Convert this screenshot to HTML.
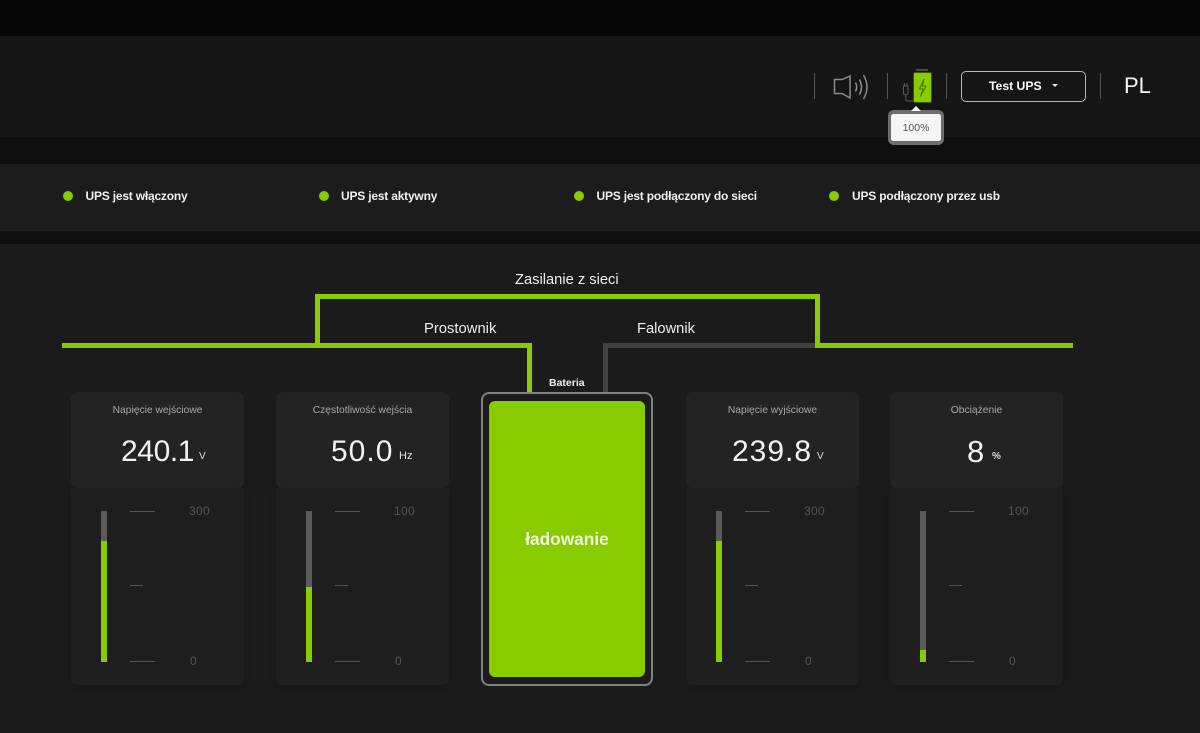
<!DOCTYPE html>
<html lang="pl"><head><meta charset="utf-8"><title>UPS</title>
<style>
*{box-sizing:border-box}
html,body{margin:0;padding:0}
body{width:1200px;height:733px;position:relative;overflow:hidden;background:#1b1b1b;font-family:"Liberation Sans",sans-serif;color:#fff}
.a{position:absolute}
.t{position:absolute;white-space:nowrap;line-height:1}
.g{background:#88cc00}
.sep{position:absolute;width:1px;height:26px;top:73px;background:#555}
.dot{position:absolute;width:10px;height:10px;border-radius:50%;background:#88cc00;top:191px}
.st{position:absolute;top:190px;font-size:12px;font-weight:bold;letter-spacing:-.2px;line-height:13px;white-space:nowrap;color:#f0f0f0}
.top{position:absolute;top:392px;width:173px;height:96px;background:#232323;border-radius:6px}
.bot{position:absolute;top:488px;width:173px;height:197px;background:#1e1e1e;border-radius:0 0 6px 6px;box-shadow:0 2px 8px rgba(0,0,0,.18)}
.lab{position:absolute;left:0;right:0;top:12.500px;text-align:center;font-size:10.300px;line-height:12px;color:#a8a8a8}
.val{position:absolute;top:44px;font-size:30px;line-height:31px;color:#f2f2f2;white-space:nowrap}
.un{position:absolute;top:58px;font-size:11px;line-height:12px;color:#ddd;white-space:nowrap}
.track{position:absolute;left:30px;top:23px;width:6px;height:151px;background:#5a5a5a}
.fill{position:absolute;left:0;right:0;bottom:0;background:#88cc00}
.tick{position:absolute;height:1px;background:#555;left:59px}
.num{position:absolute;font-size:12px;line-height:12px;color:#555;letter-spacing:.3px}
</style></head><body>
<div class="a" style="left:0;top:0;width:1200px;height:36px;background:#060606"></div>
<div class="a" style="left:0;top:36px;width:1200px;height:101px;background:#151515"></div>
<div class="a" style="left:0;top:137px;width:1200px;height:27px;background:#0f0f0f"></div>
<div class="a" style="left:0;top:164px;width:1200px;height:67px;background:#1c1c1c"></div>
<div class="a" style="left:0;top:231px;width:1200px;height:13px;background:#101010"></div>

<div class="sep" style="left:814px"></div>
<svg class="a" style="left:832px;top:72px" width="40" height="30" viewBox="0 0 40 30" fill="none" stroke="#8c8c8c" stroke-width="1.500">
<path d="M2.500 7.500H10L18 4V26L10 21.500H2.500Z"/><path d="M23.500 10.500Q25.800 15 23.500 19.500"/><path d="M27.500 7.500Q31.500 15 27.500 22.500"/><path d="M31.500 3Q38.500 15 31.500 27"/></svg>
<div class="sep" style="left:887px"></div>
<svg class="a" style="left:900px;top:68px" width="36" height="38" viewBox="0 0 36 38" fill="none">
<path d="M16 2H28" stroke="#4a4a4a" stroke-width="2"/>
<rect x="13.500" y="4.500" width="18" height="30" rx="1.500" fill="#88cc00" stroke="#3a5a00"/>
<path d="M24 11L19.500 21H23L20.500 28.500L26 18H22.500Z" stroke="#4c7200" stroke-width="1"/>
<path d="M4.500 15V18M7 15V18M3.500 18H8V24Q8 27 5.800 27Q3.500 27 3.500 24ZM5.800 27V31Q5.800 33 8 33H13" stroke="#5c5c5c" stroke-width="1"/></svg>
<div class="sep" style="left:946px"></div>
<div class="a" style="left:961px;top:71px;width:125px;height:31px;border:1px solid #b8b8b8;border-radius:5px"></div>
<div class="t" style="left:989px;top:80px;font-size:12.200px;font-weight:bold;line-height:13px">Test UPS</div>
<div class="a" style="left:1052px;top:84px;width:0;height:0;border-left:3.500px solid transparent;border-right:3.500px solid transparent;border-top:3.500px solid #e8e8e8"></div>
<div class="sep" style="left:1100px"></div>
<div class="t" style="left:1124px;top:75px;font-size:22px;line-height:22px;color:#f4f4f4">PL</div>

<div class="a" style="left:888px;top:110px;width:56px;height:35px;background:#f5f5f5;border:3px solid #6e6e6e;border-top-width:4px;border-bottom-width:4px;border-radius:6px"></div>
<div class="a" style="left:911px;top:106px;width:0;height:0;border-left:5px solid transparent;border-right:5px solid transparent;border-bottom:5px solid #f5f5f5"></div>
<div class="t" style="left:888px;width:56px;text-align:center;top:122px;font-size:10.500px;line-height:12px;color:#555">100%</div>

<div class="dot" style="left:63px"></div><div class="st" style="left:85.500px">UPS jest włączony</div>
<div class="dot" style="left:318.500px"></div><div class="st" style="left:341px">UPS jest aktywny</div>
<div class="dot" style="left:574px"></div><div class="st" style="left:596.500px">UPS jest podłączony do sieci</div>
<div class="dot" style="left:829px"></div><div class="st" style="left:852px">UPS podłączony przez usb</div>

<div class="t" style="left:515px;top:273px;font-size:14.700px;line-height:15px;color:#eee">Zasilanie z sieci</div>
<div class="t" style="left:424px;top:322px;font-size:14.800px;line-height:15px;color:#eee">Prostownik</div>
<div class="t" style="left:637px;top:322px;font-size:14.700px;line-height:15px;color:#eee">Falownik</div>
<div class="t" style="left:549px;top:377px;font-size:10.500px;font-weight:bold;line-height:12px;color:#eee">Bateria</div>

<div class="a" style="left:603px;top:343px;width:213px;height:5px;background:#404040"></div>
<div class="a" style="left:603px;top:343px;width:5px;height:50px;background:#404040"></div>
<div class="a g" style="left:62px;top:343px;width:470px;height:5px"></div>
<div class="a g" style="left:527px;top:343px;width:5px;height:50px"></div>
<div class="a g" style="left:315px;top:294px;width:5px;height:54px"></div>
<div class="a g" style="left:315px;top:294px;width:505px;height:5px"></div>
<div class="a g" style="left:815px;top:294px;width:5px;height:54px"></div>
<div class="a g" style="left:815px;top:343px;width:258px;height:5px"></div>

<div class="bot" style="left:71px"><div class="track"><div class="fill" style="height:121px"></div></div>
<div class="tick" style="top:23px;width:25px"></div><div class="tick" style="top:97px;width:13px"></div><div class="tick" style="top:173px;width:25px"></div>
<div class="num" style="left:118px;top:17px">300</div><div class="num" style="left:119px;top:167px">0</div></div>
<div class="top" style="left:71px"><div class="lab">Napięcie wejściowe</div><div class="val" style="left:50px;letter-spacing:-.4px">240.1</div><div class="un" style="left:128px;font-size:10px;top:59px">V</div></div>

<div class="bot" style="left:276px"><div class="track"><div class="fill" style="height:75px"></div></div>
<div class="tick" style="top:23px;width:25px"></div><div class="tick" style="top:97px;width:13px"></div><div class="tick" style="top:173px;width:25px"></div>
<div class="num" style="left:118px;top:17px">100</div><div class="num" style="left:119px;top:167px">0</div></div>
<div class="top" style="left:276px"><div class="lab">Częstotliwość wejścia</div><div class="val" style="left:55px;letter-spacing:1px">50.0</div><div class="un" style="left:123px;font-size:11px;top:58px">Hz</div></div>

<div class="a" style="left:481px;top:392px;width:172px;height:294px;border:2px solid #808080;border-radius:8px;background:#1c1c1c"></div>
<div class="a g" style="left:489px;top:401px;width:156px;height:276px;border-radius:6px"></div>
<div class="t" style="left:489px;width:156px;text-align:center;top:530px;font-size:17.300px;font-weight:bold;line-height:18px;color:#f2f7e4">ładowanie</div>

<div class="bot" style="left:686px"><div class="track"><div class="fill" style="height:121px"></div></div>
<div class="tick" style="top:23px;width:25px"></div><div class="tick" style="top:97px;width:13px"></div><div class="tick" style="top:173px;width:25px"></div>
<div class="num" style="left:118px;top:17px">300</div><div class="num" style="left:119px;top:167px">0</div></div>
<div class="top" style="left:686px"><div class="lab">Napięcie wyjściowe</div><div class="val" style="left:46px;letter-spacing:1px">239.8</div><div class="un" style="left:131px;font-size:10px;top:59px">V</div></div>

<div class="bot" style="left:890px"><div class="track"><div class="fill" style="height:12px"></div></div>
<div class="tick" style="top:23px;width:25px"></div><div class="tick" style="top:97px;width:13px"></div><div class="tick" style="top:173px;width:25px"></div>
<div class="num" style="left:118px;top:17px">100</div><div class="num" style="left:119px;top:167px">0</div></div>
<div class="top" style="left:890px"><div class="lab">Obciążenie</div><div class="val" style="left:77px;font-size:31px">8</div><div class="un" style="left:102px;font-size:10px;font-weight:bold;top:59px">%</div></div>
</body></html>
